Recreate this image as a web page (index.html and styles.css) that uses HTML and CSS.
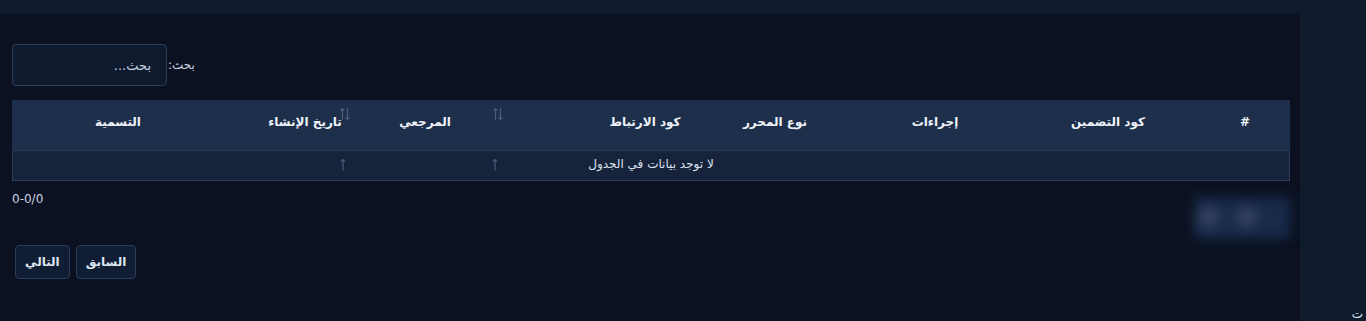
FILE: index.html
```html
<!DOCTYPE html>
<html lang="ar" dir="rtl">
<head>
  <meta charset="UTF-8" />
  <meta name="viewport" content="width=device-width, initial-scale=1.0"/>
  <title>أكواد التضمين</title>
  <link rel="stylesheet" href="styles.css">
</head>
<body>

<div class="topbar"></div>

<div class="layout">
  <aside class="sidebar">
    <span class="side-label">ت</span>
  </aside>

  <main class="main">
    <div class="filter">
      <label for="search">بحث:</label>
      <input type="search" id="search" placeholder="بحث..." />
    </div>

    <div class="table">
      <div class="thead">
        <div class="th">#</div>
        <div class="th">كود التضمين</div>
        <div class="th">إجراءات</div>
        <div class="th">نوع المحرر</div>
        <div class="th">كود الارتباط</div>
        <div class="th">المرجعي</div>
        <div class="th">تاريخ الإنشاء</div>
        <div class="th">التسمية</div>
      </div>
      <div class="tbody">
        <div class="empty">لا توجد بيانات في الجدول</div>
      </div>

      <!-- sort markers sit over the header / row -->
      <svg class="sort s1" viewBox="0 0 10 14"><path d="M2.5 13V1.5M0.5 3.5l2-2 2 2M7.5 1v11.5M5.5 10.5l2 2 2-2"/></svg>
      <svg class="sort s2" viewBox="0 0 10 14"><path d="M2.5 13V1.5M0.5 3.5l2-2 2 2M7.5 1v11.5M5.5 10.5l2 2 2-2"/></svg>
      <svg class="up u1" viewBox="0 0 6 13"><path d="M3 12.5V1.5M1 3.5l2-2 2 2"/></svg>
      <svg class="up u2" viewBox="0 0 6 13"><path d="M3 12.5V1.5M1 3.5l2-2 2 2"/></svg>
    </div>

    <div class="info-row">
      <div class="skeleton">
        <span class="blob b1"></span>
        <span class="blob b2"></span>
      </div>
      <div class="info" dir="ltr">0-0/0</div>
    </div>

    <div class="paging">
      <button class="page-btn">السابق</button>
      <button class="page-btn">التالي</button>
    </div>
  </main>
</div>

</body>
</html>
```

FILE: styles.css
```css
* { box-sizing: border-box; }
html, body {
  margin: 0;
  height: 321px;
  overflow: hidden;
}
body {
  background-color: #0b1120;
  color: #dbe4f0;
  font-family: "DejaVu Sans", "Noto Sans", sans-serif;
  font-size: 12px;
}
.topbar {
  height: 14px;
  background-color: #0f1a2d;
}
.layout {
  display: flex;
  height: 307px;
}
.sidebar {
  width: 66px;
  background-color: #0f1a2d;
  display: flex;
  flex-direction: column;
  justify-content: flex-end;
}
.side-label {
  color: #dbe4f0;
  font-size: 12px;
  line-height: 14px;
  margin-right: 3px;
}
.main {
  flex: 1;
  padding: 30px 10px 0 12px;
}
.filter {
  display: flex;
  justify-content: flex-end;
  align-items: center;
  gap: 1px;
}
.filter label {
  color: #c9d4e4;
  font-size: 12px;
}
.filter input {
  width: 155px;
  height: 42px;
  padding: 0 15px;
  background-color: #0f1a2e;
  border: 1px solid #2c3d5a;
  border-radius: 4px;
  color: #dbe4f0;
  font-family: inherit;
  font-size: 13px;
  outline: none;
}
.filter input::placeholder {
  color: #c9d4e4;
}
.table {
  position: relative;
  margin-top: 14px;
}
.thead {
  display: grid;
  grid-template-columns: 90px 184px 162px 158px 102px 229px 120px 233px;
  height: 50px;
  background-color: #1e2f4b;
}
.th {
  display: flex;
  align-items: center;
  justify-content: center;
  padding-bottom: 6px;
  color: #eef3fa;
  font-weight: bold;
  font-size: 12px;
  white-space: nowrap;
}
.th:nth-child(6) { padding-right: 109px; }
.th:nth-child(8) { padding-right: 21px; }
.tbody {
  height: 31px;
  background-color: #16233b;
  border: 1px solid #2c3d5a;
  display: flex;
  align-items: center;
  justify-content: center;
}
.empty {
  padding-bottom: 4px;
  color: #dbe4f0;
}
.sort, .up {
  position: absolute;
  fill: none;
  stroke: #4b5b77;
  stroke-width: 1.2;
}
.sort { width: 10px; height: 14px; top: 7px; }
.s1 { left: 328px; }
.s2 { left: 481px; }
.up { width: 6px; height: 13px; top: 58px; }
.u1 { left: 328px; }
.u2 { left: 480px; }
.info-row {
  display: flex;
  justify-content: space-between;
  align-items: flex-start;
  height: 48px;
  margin-top: 12px;
}
.info {
  color: #c9d4e4;
  font-size: 12px;
  margin-top: -1px;
}
.skeleton {
  position: relative;
  width: 96px;
  height: 42px;
  margin-top: 4px;
  background-color: #182a4a;
  filter: blur(6px);
}
.blob {
  position: absolute;
  top: 10px;
  width: 22px;
  height: 20px;
  border-radius: 50%;
  background-color: #34425e;
}
.b1 { right: 32px; }
.b2 { right: 71px; }
.paging {
  display: flex;
  justify-content: flex-end;
  gap: 6px;
  padding-left: 3px;
  margin-top: 4px;
}
.page-btn {
  height: 34px;
  padding: 0 9px;
  background-color: #111d32;
  border: 1px solid #2c3d5a;
  border-radius: 4px;
  color: #dde6f2;
  font-family: inherit;
  font-size: 12px;
  font-weight: bold;
  cursor: pointer;
}
```
